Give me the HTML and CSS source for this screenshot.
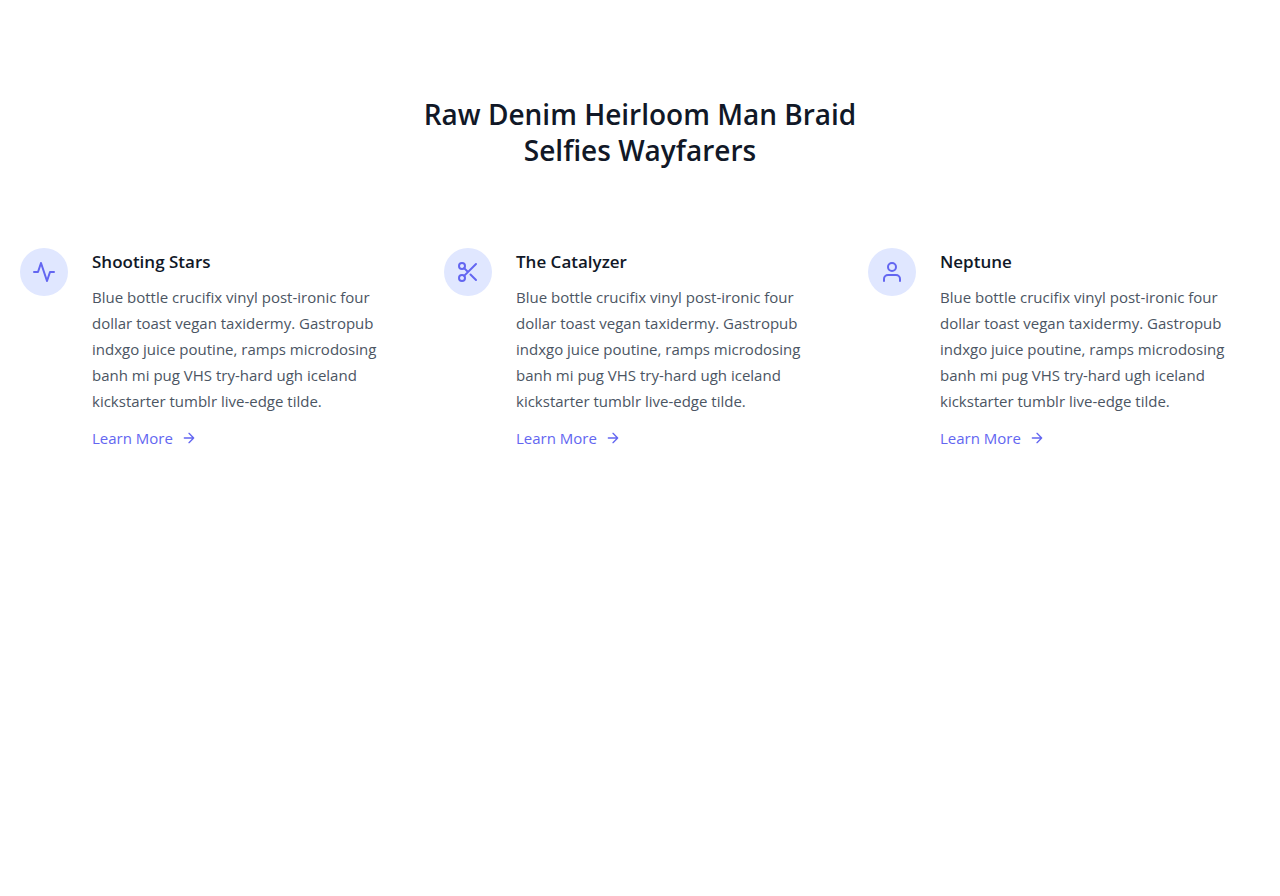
FILE: index.html
```html
<!DOCTYPE html>
<html lang="en">
<head>
<meta charset="utf-8">
<meta name="viewport" content="width=device-width, initial-scale=1">
<title>Features</title>
<link rel="stylesheet" href="styles.css">
</head>
<body>
<section class="features">
  <h1 class="title">Raw Denim Heirloom Man Braid<br>Selfies Wayfarers</h1>
  <div class="grid">
    <article class="feature">
      <div class="badge">
        <svg class="icon" viewBox="0 0 24 24" aria-hidden="true"><path d="M22 12h-4l-3 9L9 3l-3 9H2"/></svg>
      </div>
      <div class="body">
        <h2 class="name">Shooting Stars</h2>
        <p class="text">Blue bottle crucifix vinyl post-ironic four dollar toast vegan taxidermy. Gastropub indxgo juice poutine, ramps microdosing banh mi pug VHS try-hard ugh iceland kickstarter tumblr live-edge tilde.</p>
        <a class="more" href="#">Learn More<svg class="arrow" viewBox="0 0 24 24" aria-hidden="true"><path d="M5 12h14M12 5l7 7-7 7"/></svg></a>
      </div>
    </article>
    <article class="feature">
      <div class="badge">
        <svg class="icon" viewBox="0 0 24 24" aria-hidden="true"><circle cx="6" cy="6" r="3"/><circle cx="6" cy="18" r="3"/><path d="M20 4L8.12 15.88M14.47 14.48L20 20M8.12 8.12L12 12"/></svg>
      </div>
      <div class="body">
        <h2 class="name">The Catalyzer</h2>
        <p class="text">Blue bottle crucifix vinyl post-ironic four dollar toast vegan taxidermy. Gastropub indxgo juice poutine, ramps microdosing banh mi pug VHS try-hard ugh iceland kickstarter tumblr live-edge tilde.</p>
        <a class="more" href="#">Learn More<svg class="arrow" viewBox="0 0 24 24" aria-hidden="true"><path d="M5 12h14M12 5l7 7-7 7"/></svg></a>
      </div>
    </article>
    <article class="feature">
      <div class="badge">
        <svg class="icon" viewBox="0 0 24 24" aria-hidden="true"><path d="M20 21v-2a4 4 0 00-4-4H8a4 4 0 00-4 4v2"/><circle cx="12" cy="7" r="4"/></svg>
      </div>
      <div class="body">
        <h2 class="name">Neptune</h2>
        <p class="text">Blue bottle crucifix vinyl post-ironic four dollar toast vegan taxidermy. Gastropub indxgo juice poutine, ramps microdosing banh mi pug VHS try-hard ugh iceland kickstarter tumblr live-edge tilde.</p>
        <a class="more" href="#">Learn More<svg class="arrow" viewBox="0 0 24 24" aria-hidden="true"><path d="M5 12h14M12 5l7 7-7 7"/></svg></a>
      </div>
    </article>
  </div>
</section>
</body>
</html>
```
FILE: styles.css
```css
* {
  box-sizing: border-box;
  margin: 0;
}

body {
  background: #fff;
  color: #4b5563;
  font: 15px/26px "Segoe UI", "Open Sans", "Noto Sans", sans-serif;
}

.features {
  padding: 96px 20px;
}

.title {
  margin-bottom: 80px;
  color: #111827;
  font-size: 28px;
  font-weight: 600;
  line-height: 36px;
  text-align: center;
}

.grid {
  display: grid;
  grid-template-columns: repeat(auto-fit, minmax(300px, 1fr));
  gap: 32px;
}

.feature {
  display: flex;
  gap: 24px;
}

.badge {
  display: flex;
  flex: none;
  align-items: center;
  justify-content: center;
  width: 48px;
  height: 48px;
  border-radius: 50%;
  background: #e0e7ff;
  color: #6366f1;
}

.icon,
.arrow {
  fill: none;
  stroke: currentColor;
  stroke-width: 2;
  stroke-linecap: round;
  stroke-linejoin: round;
}

.icon {
  width: 24px;
  height: 24px;
}

.name {
  margin-bottom: 8px;
  color: #111827;
  font-size: 17px;
  font-weight: 600;
  line-height: 28px;
}

.text {
  margin-bottom: 12px;
}

.more {
  display: flex;
  gap: 8px;
  align-items: center;
  width: fit-content;
  color: #6366f1;
  line-height: 24px;
  text-decoration: none;
}

.arrow {
  width: 16px;
  height: 16px;
}
```
